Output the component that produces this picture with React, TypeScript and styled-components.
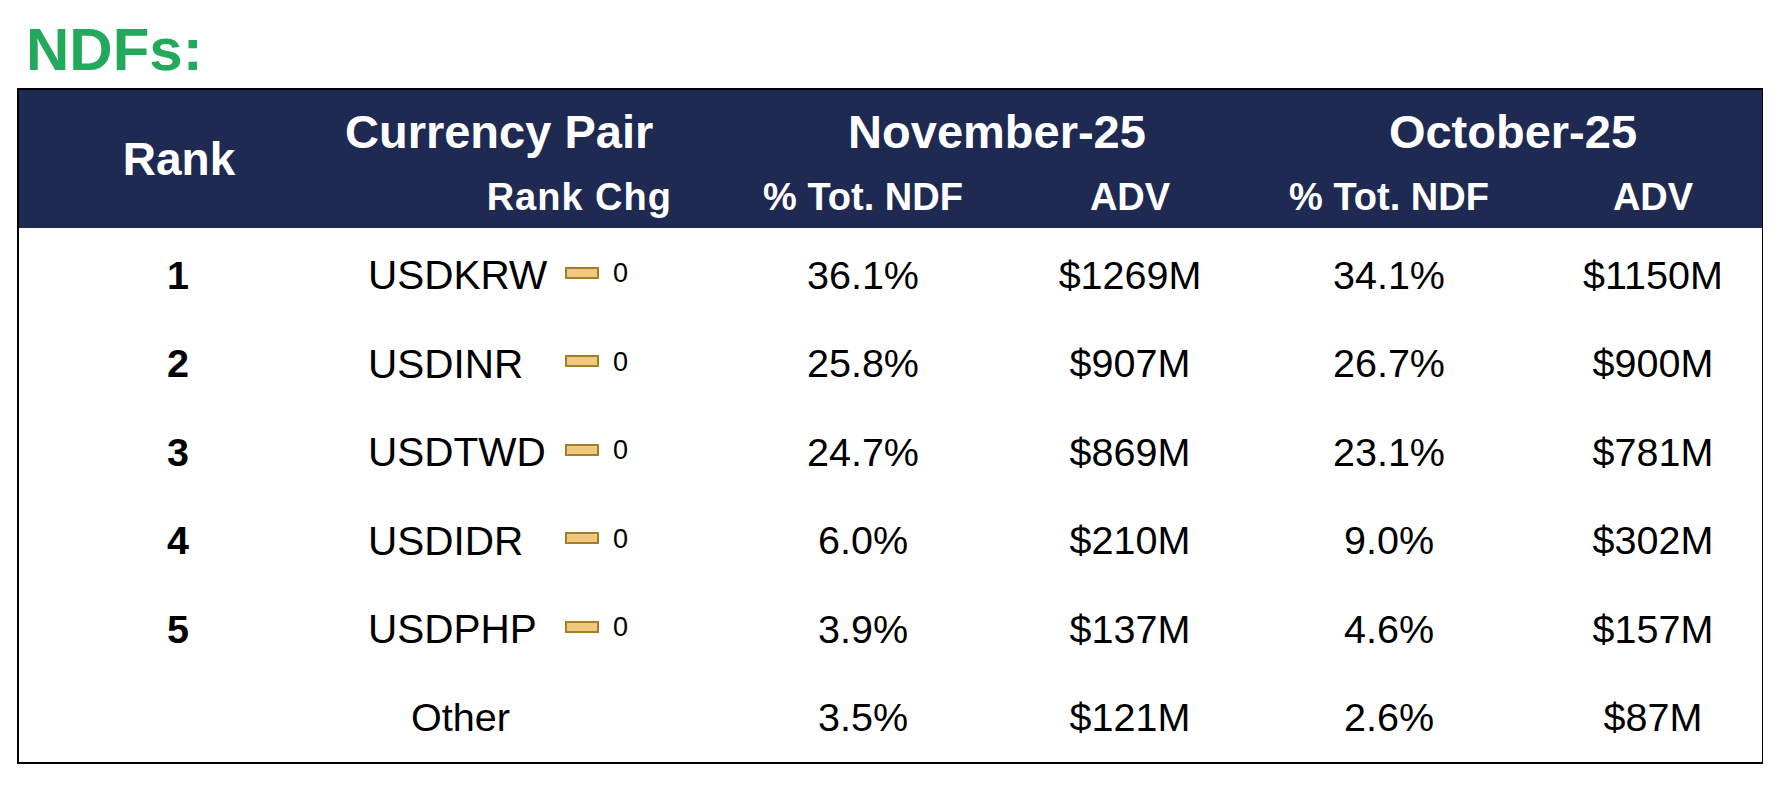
import React from "react";
import styled, { createGlobalStyle, css } from "styled-components";

const GlobalStyle = createGlobalStyle`
  html, body {
    margin: 0;
    padding: 0;
    background: #ffffff;
    font-family: "Liberation Sans", Arial, Helvetica, sans-serif;
  }
`;

const COLUMNS = "320px 391px 266px 268px 250px 248px";

const Page = styled.div`
  width: 1782px;
  box-sizing: border-box;
  padding: 0 19px 0 17px;
`;

const Title = styled.h1`
  margin: 0;
  height: 88px;
  box-sizing: border-box;
  padding: 20px 0 0 9px;
  font-size: 60px;
  line-height: 60px;
  font-weight: 700;
  color: #22a95b;
`;

const Table = styled.div`
  border-top: 2px solid #000;
  border-left: 2px solid #000;
  border-right: 1px solid #000;
  border-bottom: 2px solid #000;
`;

const Header = styled.div`
  display: grid;
  grid-template-columns: ${COLUMNS};
  grid-template-rows: 83px 47px;
  height: 138px;
  box-sizing: border-box;
  padding-bottom: 8px;
  background: #1f2a53;
  color: #ffffff;
  font-weight: 700;
`;

type Align = "left" | "center" | "right";

const HeadCell = styled.div<{
  $col: string;
  $row: string;
  $size: number;
  $align?: Align;
  $pl?: number;
  $pr?: number;
  $pt?: number;
  $ls?: number;
}>`
  grid-column: ${(p) => p.$col};
  grid-row: ${(p) => p.$row};
  display: flex;
  align-items: center;
  justify-content: ${(p) =>
    p.$align === "left" ? "flex-start" : p.$align === "right" ? "flex-end" : "center"};
  font-size: ${(p) => p.$size}px;
  line-height: 1;
  white-space: nowrap;
  letter-spacing: ${(p) => p.$ls ?? 0}px;
  padding-left: ${(p) => p.$pl ?? 0}px;
  padding-right: ${(p) => p.$pr ?? 0}px;
  padding-top: ${(p) => p.$pt ?? 0}px;
`;

const Body = styled.div`
  padding-top: 3px;
`;

const Row = styled.div`
  display: grid;
  grid-template-columns: ${COLUMNS};
  height: 88.5px;
  align-items: center;
  font-size: 39.5px;
  line-height: 1;
  color: #000;
`;

const Cell = styled.div<{ $shift?: number }>`
  display: flex;
  justify-content: center;
  align-items: center;
  white-space: nowrap;
  ${(p) =>
    p.$shift
      ? css`
          padding-left: ${p.$shift}px;
        `
      : ""}
`;

const RankNum = styled(Cell)`
  font-weight: 700;
  padding-right: 2px;
`;

const PairCell = styled.div<{ $pl: number }>`
  display: flex;
  align-items: center;
  padding-left: ${(p) => p.$pl}px;
  white-space: nowrap;
`;

const PairName = styled.span`
  width: 197px;
  flex: none;
  font-size: 40.5px;
`;

const ChgBar = styled.span`
  width: 34px;
  height: 12px;
  box-sizing: border-box;
  flex: none;
  border: 2px solid #a57e2b;
  background: #f1c97e;
  margin-top: -5px;
`;

const ChgValue = styled.span`
  font-size: 27px;
  margin-left: 14px;
  margin-top: -3px;
`;

type Rec = {
  rank?: number;
  pair: string;
  chg?: number;
  novPct: string;
  novAdv: string;
  octPct: string;
  octAdv: string;
};

const rows: Rec[] = [
  { rank: 1, pair: "USDKRW", chg: 0, novPct: "36.1%", novAdv: "$1269M", octPct: "34.1%", octAdv: "$1150M" },
  { rank: 2, pair: "USDINR", chg: 0, novPct: "25.8%", novAdv: "$907M", octPct: "26.7%", octAdv: "$900M" },
  { rank: 3, pair: "USDTWD", chg: 0, novPct: "24.7%", novAdv: "$869M", octPct: "23.1%", octAdv: "$781M" },
  { rank: 4, pair: "USDIDR", chg: 0, novPct: "6.0%", novAdv: "$210M", octPct: "9.0%", octAdv: "$302M" },
  { rank: 5, pair: "USDPHP", chg: 0, novPct: "3.9%", novAdv: "$137M", octPct: "4.6%", octAdv: "$157M" },
  { pair: "Other", novPct: "3.5%", novAdv: "$121M", octPct: "2.6%", octAdv: "$87M" },
];

export default function App() {
  return (
    <>
      <GlobalStyle />
      <Page>
        <Title>NDFs:</Title>
        <Table>
          <Header>
            <HeadCell $col="1" $row="1 / span 2" $size={46} $pt={8}>
              Rank
            </HeadCell>
            <HeadCell $col="2" $row="1" $size={47} $align="left" $pl={6}>
              Currency Pair
            </HeadCell>
            <HeadCell $col="3 / span 2" $row="1" $size={47}>
              November-25
            </HeadCell>
            <HeadCell $col="5 / span 2" $row="1" $size={47}>
              October-25
            </HeadCell>
            <HeadCell $col="2" $row="2" $size={38} $align="right" $pr={58} $ls={1}>
              Rank Chg
            </HeadCell>
            <HeadCell $col="3" $row="2" $size={38}>
              % Tot. NDF
            </HeadCell>
            <HeadCell $col="4" $row="2" $size={38}>
              ADV
            </HeadCell>
            <HeadCell $col="5" $row="2" $size={38}>
              % Tot. NDF
            </HeadCell>
            <HeadCell $col="6" $row="2" $size={38} $pl={30}>
              ADV
            </HeadCell>
          </Header>
          <Body>
            {rows.map((r) => (
              <Row key={r.pair}>
                <RankNum>{r.rank ?? ""}</RankNum>
                {r.rank !== undefined ? (
                  <PairCell $pl={29}>
                    <PairName>{r.pair}</PairName>
                    <ChgBar />
                    <ChgValue>{r.chg}</ChgValue>
                  </PairCell>
                ) : (
                  <PairCell $pl={72}>{r.pair}</PairCell>
                )}
                <Cell>{r.novPct}</Cell>
                <Cell>{r.novAdv}</Cell>
                <Cell>{r.octPct}</Cell>
                <Cell $shift={30}>{r.octAdv}</Cell>
              </Row>
            ))}
          </Body>
        </Table>
      </Page>
    </>
  );
}
